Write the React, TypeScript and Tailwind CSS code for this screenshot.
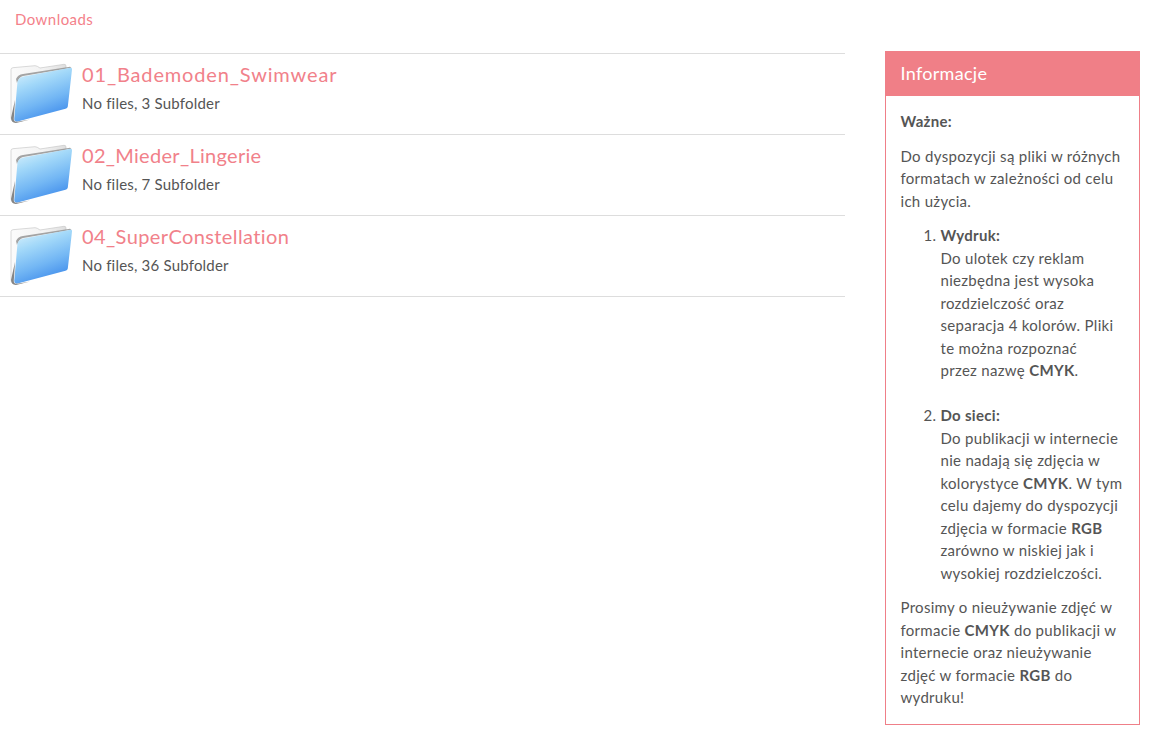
import React from 'react';

const folders = [
  { name: '01_Bademoden_Swimwear', info: 'No files, 3 Subfolder', tracking: 'tracking-[0.85px]' },
  { name: '02_Mieder_Lingerie', info: 'No files, 7 Subfolder', tracking: 'tracking-[0.3px]' },
  { name: '04_SuperConstellation', info: 'No files, 36 Subfolder', tracking: 'tracking-[0.4px]' },
];

function FolderIcon({ id }: { id: string }) {
  return (
    <svg width="64" height="64" viewBox="0 0 64 64" className="shrink-0">
      <defs>
        <linearGradient id={`blue-${id}`} x1="0.2" y1="0" x2="0.6" y2="1">
          <stop offset="0" stopColor="#d6f0fc" />
          <stop offset="0.3" stopColor="#a2d8f9" />
          <stop offset="0.65" stopColor="#72b6f4" />
          <stop offset="1" stopColor="#3d8aeb" />
        </linearGradient>
        <linearGradient id={`back-${id}`} x1="0" y1="0" x2="1" y2="0">
          <stop offset="0" stopColor="#fbfbfb" />
          <stop offset="0.6" stopColor="#f2f2f2" />
          <stop offset="1" stopColor="#dedede" />
        </linearGradient>
      </defs>
      <path d="M1 7.500 Q1 6 3 5.700 L25 3.700 Q27 3.700 30 6 L54 2.300 Q56 2.200 56 4 L56 20 L6 60 Q1.500 60.500 1 56 Z" fill={`url(#back-${id})`} stroke="#c8c8c8" strokeWidth="0.7" />
      <path d="M6 17 Q8 12.500 13 12 L60 4.800 L61.500 5.800 L13 14 Q9 15 7 21 Z" fill="#8e8e8e" opacity="0.8" />
      <path d="M7.500 19.500 Q8.500 15.500 13.500 14.500 L60.500 5.800 Q62.300 5.600 62 7.500 L57.800 44.500 Q57.500 46.300 55.500 46.800 L7.500 59.500 Q4 60 4.300 56.500 Z" fill={`url(#blue-${id})`} />
      <path d="M1 56 Q1.500 61.500 7 60.800 L20 57.500 L7.500 59.800 Q3.500 60.200 3.800 56.500 L5 38 Z" fill="#858585" />
    </svg>
  );
}

export default function App() {
  return (
    <div className="min-h-[739px] bg-white font-['Lato','Liberation_Sans',sans-serif] text-[15px] leading-[22.500px] tracking-[0.3px] text-[#555555]">
      <div className="flex">
        <div className="w-[845px] shrink-0">
          <div className="h-[53px] pl-[15px] pt-[8px] tracking-[0.45px] text-[#f4818a]">Downloads</div>
          <div className="border-t border-[#dddddd]">
            {folders.map((f, i) => (
              <div key={f.name} className="flex h-[81px] gap-[8px] border-b border-[#dddddd] pl-[10px] pt-[8px]">
                <FolderIcon id={String(i)} />
                <div>
                  <div className={`mt-[-1px] text-[20px] leading-[26px] text-[#f1818a] ${f.tracking}`}>{f.name}</div>
                  <div className="mt-[5px] tracking-[0.2px]">{f.info}</div>
                </div>
              </div>
            ))}
          </div>
        </div>
        <aside className="ml-[40px] mt-[51px] mb-[14px] w-[255px] border border-[#ef7f88]">
          <h3 className="flex h-[44px] items-center bg-[#f07f87] px-[14.500px] pb-[1px] text-[18px] text-white">Informacje</h3>
          <div className="px-[14.500px] pt-[14px] pb-[15px]">
            <p className="mb-[12px] font-bold">Ważne:</p>
            <p className="mb-[12px]">Do dyspozycji są pliki w różnych formatach w zależności od celu ich użycia.</p>
            <ol className="mb-[12px] list-decimal pl-[40px]">
              <li>
                <b>Wydruk:</b>
                <br />
                Do ulotek czy reklam niezbędna jest wysoka rozdzielczość oraz separacja 4 kolorów. Pliki te można rozpoznać
                <br />
                przez nazwę <b>CMYK</b>.
                <br />
                <br />
              </li>
              <li>
                <b>Do sieci:</b>
                <br />
                Do publikacji w internecie nie nadają się zdjęcia w kolorystyce <b>CMYK</b>. W tym celu dajemy do dyspozycji zdjęcia w formacie <b>RGB</b> zarówno w niskiej jak i wysokiej rozdzielczości.
              </li>
            </ol>
            <p>Prosimy o nieużywanie zdjęć w formacie <b>CMYK</b> do publikacji w internecie oraz nieużywanie zdjęć w formacie <b>RGB</b> do wydruku!</p>
          </div>
        </aside>
      </div>
    </div>
  );
}
